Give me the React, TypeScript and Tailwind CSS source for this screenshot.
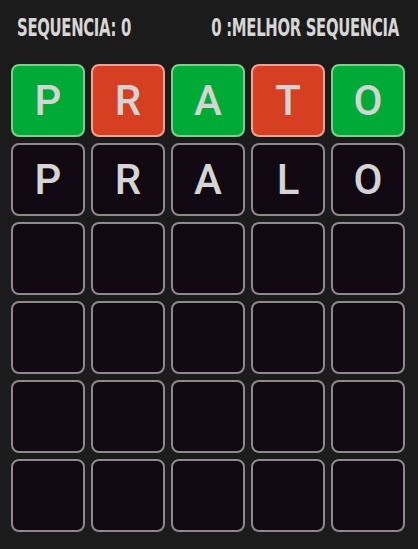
const rows = [
  [
    { l: "P", s: "hit" },
    { l: "R", s: "miss" },
    { l: "A", s: "hit" },
    { l: "T", s: "miss" },
    { l: "O", s: "hit" },
  ],
  [
    { l: "P", s: "" },
    { l: "R", s: "" },
    { l: "A", s: "" },
    { l: "L", s: "" },
    { l: "O", s: "" },
  ],
]

const tileClass = (s: string) => {
  if (s === "hit") return "bg-[#00aa36] border-[#78d08a]"
  if (s === "miss") return "bg-[#d63f21] border-[#f0a291]"
  return "bg-[#110811] border-[#8c8a8c]"
}

export default function App() {
  const grid = Array.from({ length: 6 }, (_, r) =>
    Array.from({ length: 5 }, (_, c) => rows[r]?.[c] ?? { l: "", s: "" })
  )

  return (
    <div className="w-[418px] h-[549px] bg-[#1b1b1b] px-[11px] overflow-hidden">
      <div className="flex justify-between items-center h-[55px] pl-[6px] pr-[8px] pt-[2px] text-[#d6d6d6] font-bold text-[16.5px] font-['DejaVu_Sans_Condensed',sans-serif]">
        <span className="inline-block [transform:scaleY(1.55)] tracking-[-0.3px]">SEQUENCIA: 0</span>
        <span className="inline-block [transform:scaleY(1.55)] tracking-[-0.3px]">0 :MELHOR SEQUENCIA</span>
      </div>
      <div className="grid grid-cols-5 gap-x-[6px] gap-y-[6px] mt-[9px] w-[394px]">
        {grid.flat().map((t, i) => (
          <div
            key={i}
            className={`h-[73px] rounded-[8px] border-2 flex items-center justify-center text-[#d4d4d4] text-[42px] font-medium font-['Roboto',sans-serif] ${tileClass(t.s)}`}
          >
            {t.l}
          </div>
        ))}
      </div>
    </div>
  )
}
